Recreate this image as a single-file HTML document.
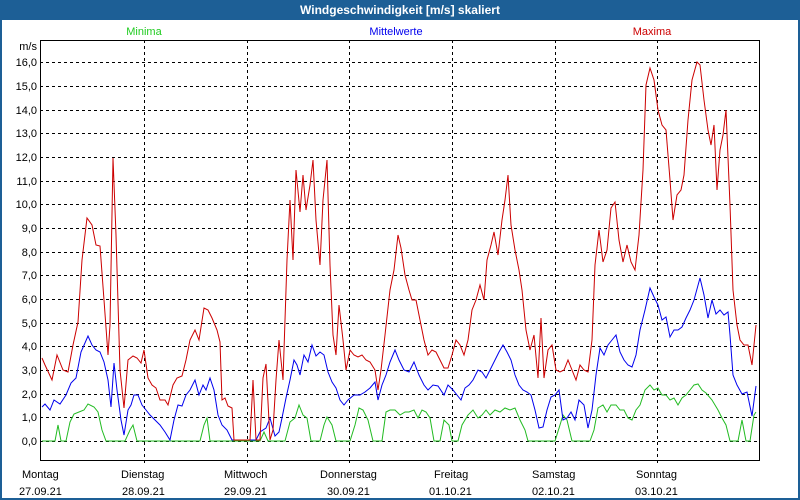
<!DOCTYPE html>
<html><head><meta charset="utf-8"><style>
html,body{margin:0;padding:0;width:800px;height:500px;overflow:hidden;background:#fff}
svg{display:block;font-family:"Liberation Sans",sans-serif}
</style></head><body>
<svg width="800" height="500" xmlns="http://www.w3.org/2000/svg">
<rect x="0" y="0" width="800" height="500" fill="#1d5f96"/>
<rect x="2" y="20" width="796" height="478" fill="#fff"/>
<text x="400" y="14" fill="#fff" font-size="12" font-weight="bold" text-anchor="middle">Windgeschwindigkeit [m/s] skaliert</text>
<text x="144" y="35" fill="#22cc22" font-size="11" text-anchor="middle">Minima</text>
<text x="396" y="35" fill="#0000ee" font-size="11" text-anchor="middle">Mittelwerte</text>
<text x="652" y="35" fill="#cc0000" font-size="11" text-anchor="middle">Maxima</text>
<g stroke="#000" stroke-dasharray="3,3" stroke-width="1">
<line x1="40" x2="760" y1="62.5" y2="62.5"/><line x1="40" x2="760" y1="86.5" y2="86.5"/><line x1="40" x2="760" y1="110.5" y2="110.5"/><line x1="40" x2="760" y1="133.5" y2="133.5"/><line x1="40" x2="760" y1="157.5" y2="157.5"/><line x1="40" x2="760" y1="181.5" y2="181.5"/><line x1="40" x2="760" y1="204.5" y2="204.5"/><line x1="40" x2="760" y1="228.5" y2="228.5"/><line x1="40" x2="760" y1="252.5" y2="252.5"/><line x1="40" x2="760" y1="275.5" y2="275.5"/><line x1="40" x2="760" y1="299.5" y2="299.5"/><line x1="40" x2="760" y1="323.5" y2="323.5"/><line x1="40" x2="760" y1="346.5" y2="346.5"/><line x1="40" x2="760" y1="370.5" y2="370.5"/><line x1="40" x2="760" y1="394.5" y2="394.5"/><line x1="40" x2="760" y1="417.5" y2="417.5"/><line x1="40" x2="760" y1="441.5" y2="441.5"/>
<line x1="144.5" x2="144.5" y1="40" y2="466"/><line x1="247.5" x2="247.5" y1="40" y2="466"/><line x1="349.5" x2="349.5" y1="40" y2="466"/><line x1="452.5" x2="452.5" y1="40" y2="466"/><line x1="555.5" x2="555.5" y1="40" y2="466"/><line x1="657.5" x2="657.5" y1="40" y2="466"/>
</g>
<rect x="40.5" y="40.5" width="719" height="420" fill="none" stroke="#000"/>
<g font-size="11" fill="#000" text-anchor="end">
<text x="37" y="50">m/s</text>
<text x="37" y="66">16,0</text><text x="37" y="90">15,0</text><text x="37" y="114">14,0</text><text x="37" y="137">13,0</text><text x="37" y="161">12,0</text><text x="37" y="185">11,0</text><text x="37" y="208">10,0</text><text x="37" y="232">9,0</text><text x="37" y="256">8,0</text><text x="37" y="279">7,0</text><text x="37" y="303">6,0</text><text x="37" y="327">5,0</text><text x="37" y="350">4,0</text><text x="37" y="374">3,0</text><text x="37" y="398">2,0</text><text x="37" y="421">1,0</text><text x="37" y="445">0,0</text>
</g>
<g font-size="11" fill="#000">
<text x="22" y="478">Montag</text><text x="19" y="495">27.09.21</text>
<text x="121" y="478">Dienstag</text><text x="122" y="495">28.09.21</text>
<text x="224" y="478">Mittwoch</text><text x="224" y="495">29.09.21</text>
<text x="320" y="478">Donnerstag</text><text x="327" y="495">30.09.21</text>
<text x="434" y="478">Freitag</text><text x="429" y="495">01.10.21</text>
<text x="532" y="478">Samstag</text><text x="532" y="495">02.10.21</text>
<text x="636" y="478">Sonntag</text><text x="635" y="495">03.10.21</text>
</g>
<polyline fill="none" stroke="#22bb22" stroke-width="1" points="42,441 55,441 58,425 61,441 66,441 70,422 74,414 79,412 84,410 88,404 94,407 98,412 102,430 106,441 125,441 130,430 133,425 137,441 200,441 204,425 207,418 210,441 260,441 264,432 268,441 285,441 290,422 295,418 299,405 303,415 307,418 311,441 320,441 324,425 327,417 332,425 336,441 350,441 355,425 359,408 363,410 368,420 373,441 382,441 386,412 390,410 395,410 400,415 405,412 409,412 414,410 418,418 422,410 426,412 430,418 434,441 440,441 444,420 449,425 452,441 458,441 462,425 468,415 473,410 478,418 482,415 486,410 490,415 495,410 500,412 505,408 510,410 515,408 520,420 525,430 528,441 555,441 560,425 563,415 567,420 572,441 590,441 594,430 598,408 603,405 607,412 611,405 616,405 620,410 624,410 628,418 632,420 636,410 640,405 645,390 650,385 654,390 658,388 662,395 666,395 670,400 674,398 678,405 682,398 686,395 690,390 694,385 698,384 702,390 706,393 712,400 718,410 722,418 726,425 730,441 738,441 742,420 746,441 750,441 754,415 756,412"/>
<polyline fill="none" stroke="#0000ee" stroke-width="1" points="42,407 45,404 50,410 54,400 60,404 66,395 71,383 76,378 81,352 88,336 92,345 96,350 100,352 104,362 108,380 111,407 114,363 117,390 121,420 124,435 128,410 131,405 134,395 138,395 142,405 146,410 150,415 155,420 160,425 165,432 170,440 174,420 178,405 182,406 186,395 190,390 195,380 199,395 203,385 206,390 210,378 214,390 218,415 222,425 227,430 232,440 256,440 260,432 266,428 270,418 275,436 279,432 282,418 286,398 290,380 294,360 297,365 300,375 304,355 308,362 312,345 316,356 320,352 324,355 328,372 332,382 336,388 340,400 344,405 348,400 354,395 360,395 365,392 370,388 375,382 378,400 382,385 386,375 390,362 395,350 399,360 404,370 409,372 414,362 419,375 424,385 428,390 433,385 438,386 444,395 448,385 453,390 457,395 461,400 465,388 469,385 473,380 478,370 482,372 486,378 490,370 495,360 499,352 503,345 507,352 511,360 515,375 519,385 523,390 527,392 531,395 535,410 539,428 543,427 547,410 551,397 555,395 559,390 563,420 567,418 571,412 575,420 579,400 584,405 588,428 592,410 596,375 600,348 604,355 608,345 612,340 616,335 620,352 624,360 628,365 632,367 636,355 640,330 645,310 650,288 654,297 658,305 662,320 666,317 670,337 674,330 678,330 682,327 686,318 690,310 694,300 700,278 704,295 708,318 712,300 716,314 720,310 724,315 728,312 730,335 733,375 737,385 742,394 747,392 752,416 756,386"/>
<polyline fill="none" stroke="#cc0000" stroke-width="1" points="42,358 45,365 52,380 57,355 63,370 68,372 73,345 78,322 82,260 87,218 92,225 96,245 100,246 104,300 108,355 110,325 113,158 116,235 120,370 124,408 128,360 133,356 137,358 141,363 144,350 148,378 152,385 156,388 160,400 165,400 168,405 173,385 177,378 182,376 186,360 190,340 195,330 199,340 204,308 208,310 212,318 217,330 220,342 222,400 225,398 228,406 232,408 234,440 250,440 253,380 256,440 260,440 263,378 266,364 270,440 273,430 276,380 279,340 283,380 287,260 290,200 293,260 296,170 300,212 303,175 306,210 310,185 313,160 316,220 320,265 323,200 327,160 330,265 333,335 336,355 339,305 343,340 346,370 350,350 354,355 358,357 362,355 366,360 370,362 375,370 378,390 381,370 385,335 390,290 394,270 398,235 401,248 405,275 409,290 412,300 416,300 420,320 424,340 428,355 432,350 436,352 440,360 444,368 448,368 452,355 456,340 460,345 464,355 468,340 472,310 476,300 480,285 484,300 487,260 491,245 494,232 498,255 502,220 505,200 508,175 511,225 515,250 519,270 522,290 526,330 530,350 534,335 538,378 541,318 544,378 548,350 552,345 556,370 560,372 564,370 568,360 572,370 576,380 580,365 584,370 588,372 592,340 595,265 599,230 603,262 607,250 611,208 615,202 619,240 623,262 627,245 631,262 635,270 639,235 643,170 646,85 650,68 654,80 658,110 662,125 666,130 670,180 673,220 677,195 681,190 684,175 688,120 692,80 697,62 700,65 704,100 708,130 711,145 714,125 717,190 720,150 723,135 726,110 730,205 733,290 737,325 740,340 744,345 748,345 752,365 756,325"/>
</svg>
</body></html>
